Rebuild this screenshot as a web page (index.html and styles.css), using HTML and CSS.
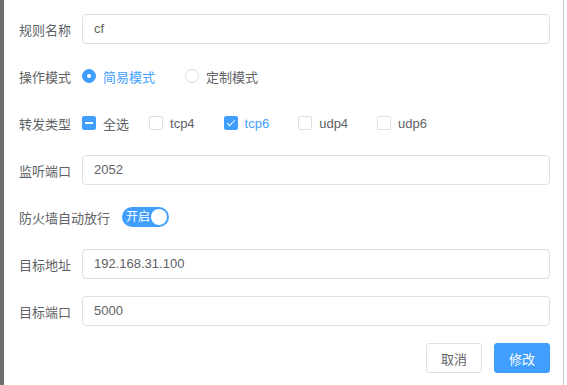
FILE: index.html
```html
<!DOCTYPE html>
<html lang="zh">
<head>
<meta charset="utf-8">
<link rel="stylesheet" href="styles.css">
</head>
<body>
<div class="page">
  <div class="strip"></div>
  <div class="dialog">
    <form class="form">
      <div class="row">
        <label class="label">规则名称</label>
        <div class="input">cf</div>
      </div>
      <div class="row">
        <label class="label">操作模式</label>
        <div class="options">
          <span class="radio on"><span class="dot"></span><span class="txt">简易模式</span></span>
          <span class="radio"><span class="dot"></span><span class="txt">定制模式</span></span>
        </div>
      </div>
      <div class="row">
        <label class="label">转发类型</label>
        <div class="options">
          <span class="check ind all"><span class="box"></span><span class="txt">全选</span></span>
          <span class="check"><span class="box"></span><span class="txt">tcp4</span></span>
          <span class="check on"><span class="box"></span><span class="txt">tcp6</span></span>
          <span class="check"><span class="box"></span><span class="txt">udp4</span></span>
          <span class="check"><span class="box"></span><span class="txt">udp6</span></span>
        </div>
      </div>
      <div class="row">
        <label class="label">监听端口</label>
        <div class="input">2052</div>
      </div>
      <div class="row">
        <label class="label wide">防火墙自动放行</label>
        <span class="switch"><span class="sw-txt">开启</span><span class="knob"></span></span>
      </div>
      <div class="row">
        <label class="label">目标地址</label>
        <div class="input">192.168.31.100</div>
      </div>
      <div class="row">
        <label class="label">目标端口</label>
        <div class="input">5000</div>
      </div>
      <div class="row actions">
        <button type="button" class="btn">取消</button>
        <button type="button" class="btn primary">修改</button>
      </div>
    </form>
  </div>
  <div class="edge"></div>
</div>
</body>
</html>
```
FILE: styles.css
```css
* { box-sizing: border-box; }
html, body { margin: 0; padding: 0; background: #fff; }
body {
  font-family: "Liberation Sans", "Noto Sans CJK SC", sans-serif;
  font-size: 13px;
  color: #606266;
}
.page { display: flex; width: 567px; height: 385px; overflow: hidden; }
.strip { width: 4px; background: #6e6d72; flex: none; }
.edge { width: 1px; background: #c8c8cc; flex: none; margin-left: 9px; margin-right: 3px; }
.dialog { flex: 1; padding: 14px 0 0 15px; }
.form { display: flex; flex-direction: column; gap: 17px; width: 531px; }
.row { display: flex; align-items: center; height: 30px; }
.label { width: 63px; flex: none; color: #606266; font-size: 13px; }
.label.wide { width: 103px; }
.input {
  flex: 1;
  height: 30px;
  border: 1px solid #dcdfe6;
  border-radius: 4px;
  padding: 0 11px;
  line-height: 28px;
  color: #606266;
  font-size: 13px;
}
.options { display: flex; align-items: center; }
.radio, .check { display: inline-flex; align-items: center; }
.radio { margin-right: 30px; }
.check { margin-right: 29px; }
.check.all { margin-right: 20px; }
.txt { margin-left: 7px; font-size: 13px; color: #606266; }
.radio.on .txt, .check.on .txt { color: #409eff; }
.dot {
  width: 14px; height: 14px; border-radius: 50%;
  border: 1px solid #dcdfe6; background: #fff;
  display: inline-flex; align-items: center; justify-content: center;
}
.radio.on .dot { background: #409eff; border-color: #409eff; }
.radio.on .dot::after {
  content: ""; width: 4px; height: 4px; border-radius: 50%; background: #fff;
}
.box {
  width: 14px; height: 14px; border-radius: 2px;
  border: 1px solid #dcdfe6; background: #fff; position: relative;
}
.check.on .box, .check.ind .box { background: #409eff; border-color: #409eff; }
.check.ind .box::after {
  content: ""; position: absolute; left: 2px; right: 2px; top: 5px; height: 2px; background: #fff;
}
.check.on .box::after {
  content: ""; position: absolute; left: 4px; top: 1px; width: 3px; height: 7px;
  border: 1px solid #fff; border-left: 0; border-top: 0; transform: rotate(45deg);
}
.switch {
  position: relative;
  width: 47px; height: 20px; border-radius: 10px;
  background: #409eff;
  display: inline-flex; align-items: center;
}
.sw-txt { color: #fff; font-size: 12px; margin-left: 4px; line-height: 20px; }
.knob {
  position: absolute; right: 2px; top: 2px;
  width: 16px; height: 16px; border-radius: 50%; background: #fff;
}
.actions { justify-content: flex-end; gap: 12px; padding-right: 0; }
.btn {
  width: 56px; height: 30px; border-radius: 3px;
  border: 1px solid #dcdfe6; background: #fff; color: #606266;
  font-family: inherit; font-size: 13px; padding: 0; cursor: pointer;
}
.btn.primary { background: #409eff; border-color: #409eff; color: #fff; }
```
